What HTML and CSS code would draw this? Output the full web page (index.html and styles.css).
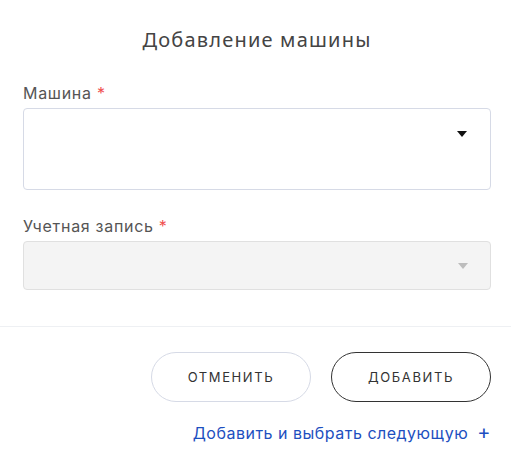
FILE: index.html
```html
<!DOCTYPE html>
<html lang="ru">
<head>
<meta charset="utf-8">
<title>Добавление машины</title>
<link rel="stylesheet" href="styles.css">
</head>
<body>
<div class="modal">
  <h1 class="title">Добавление машины</h1>
  <div class="form">
    <div class="field">
      <label class="label">Машина <span class="req">*</span></label>
      <div class="select select-tall"><span class="arrow"></span></div>
    </div>
    <div class="field">
      <label class="label">Учетная запись <span class="req">*</span></label>
      <div class="select select-disabled"><span class="arrow arrow-muted"></span></div>
    </div>
  </div>
  <div class="divider"></div>
  <div class="actions">
    <button class="btn btn-cancel">Отменить</button>
    <button class="btn btn-add">Добавить</button>
  </div>
  <div class="next">
    <a class="next-link" href="#">Добавить и выбрать следующую <span class="plus">+</span></a>
  </div>
</div>
</body>
</html>
```
FILE: styles.css
```css
html, body {
  margin: 0;
  padding: 0;
  background: #ffffff;
}
body {
  font-family: "Inter", "Noto Sans", sans-serif;
}
.modal {
  width: 511px;
  padding-top: 28px;
}
.title {
  margin: 0 20px 0 23px;
  font-family: "Noto Sans", "Open Sans", sans-serif;
  font-weight: 400;
  font-size: 20px;
  line-height: 24px;
  color: #444444;
  text-align: center;
  letter-spacing: 1.2px;
}
.form {
  padding: 32px 20px 0 23px;
  display: flex;
  flex-direction: column;
  gap: 27px;
}
.field {
  display: flex;
  flex-direction: column;
  gap: 6px;
}
.label {
  font-size: 16px;
  line-height: 18px;
  letter-spacing: 0.7px;
  color: #555555;
}
.req {
  color: #f0504f;
}
.select {
  box-sizing: border-box;
  border: 1px solid #d6dae6;
  border-radius: 4px;
  display: flex;
  justify-content: flex-end;
}
.select-tall {
  height: 82px;
  align-items: flex-start;
  padding: 22px 23px 0 0;
  background: #ffffff;
}
.select-disabled {
  height: 49px;
  align-items: center;
  padding: 0 22px 0 0;
  background: #f4f4f4;
  border-color: #e0e0e0;
}
.arrow {
  width: 0;
  height: 0;
  border-left: 5px solid transparent;
  border-right: 5px solid transparent;
  border-top: 6px solid #111111;
}
.arrow-muted {
  border-top-color: #bdbdbd;
}
.divider {
  margin-top: 36px;
  height: 1px;
  background: #eef0f3;
}
.actions {
  display: flex;
  justify-content: flex-end;
  gap: 20px;
  padding: 25px 20px 0 23px;
}
.btn {
  box-sizing: border-box;
  width: 160px;
  height: 50px;
  border-radius: 25px;
  background: #ffffff;
  font-family: "Inter", "Noto Sans", sans-serif;
  font-size: 13px;
  letter-spacing: 1.6px;
  text-transform: uppercase;
  color: #333333;
  cursor: pointer;
}
.btn-cancel {
  border: 1px solid #d6dae6;
}
.btn-add {
  border: 1px solid #333333;
}
.next {
  display: flex;
  justify-content: flex-end;
  padding: 20px 20px 0 23px;
}
.next-link {
  font-size: 16px;
  line-height: 20px;
  letter-spacing: 0.5px;
  color: #1d4fc0;
  text-decoration: none;
}
.plus {
  font-size: 20px;
  margin-left: 4px;
}
```
